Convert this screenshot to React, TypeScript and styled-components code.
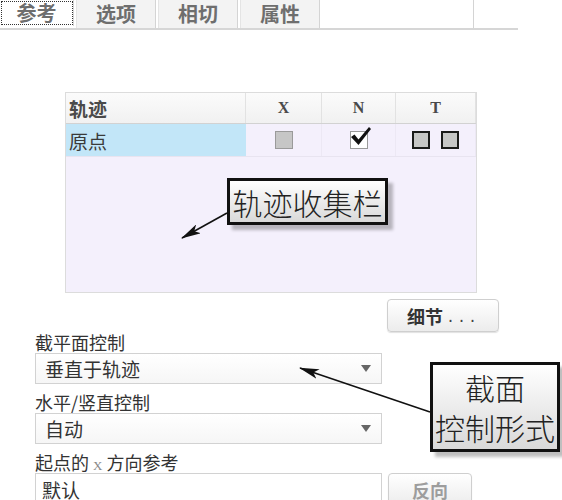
import React from 'react';
import styled, {createGlobalStyle} from "styled-components";

const GlobalStyle = createGlobalStyle`
  body {
    margin: 0;
    background: #ffffff;
    font-family: "Noto Sans CJK SC", "Noto Sans", sans-serif;
  }
`

const cjk = `"Noto Sans CJK SC", "Noto Sans", sans-serif`

export default function App() {
    return (
        <PageStyled>
            <GlobalStyle/>
            <TabBarStyled>
                <TabStyled $active>参考</TabStyled>
                <TabStyled>选项</TabStyled>
                <TabStyled>相切</TabStyled>
                <TabStyled>属性</TabStyled>
                <TabFillStyled/>
            </TabBarStyled>

            <TrajectoryPanelStyled>
                <TableRowStyled $header>
                    <HeadCellStyled $left>轨迹</HeadCellStyled>
                    <HeadCellStyled>X</HeadCellStyled>
                    <HeadCellStyled>N</HeadCellStyled>
                    <HeadCellStyled>T</HeadCellStyled>
                </TableRowStyled>
                <TableRowStyled>
                    <NameCellStyled>原点</NameCellStyled>
                    <BoxCellStyled><CheckStyled/></BoxCellStyled>
                    <BoxCellStyled>
                        <CheckStyled $white>
                            {/* heavy tick that rises past the top of the box */}
                            <svg width="24" height="24" viewBox="0 0 24 24">
                                <path d="M2 12 L5.5 9.5 L9.5 14.5 L20 2 L22 4 L9.5 20 Z" fill="#111"/>
                            </svg>
                        </CheckStyled>
                    </BoxCellStyled>
                    <BoxCellStyled>
                        <CheckStyled $dark/>
                        <CheckStyled $dark/>
                    </BoxCellStyled>
                </TableRowStyled>
                <CalloutStyled $x={161} $y={85} $w={161} $h={47}>轨迹收集栏</CalloutStyled>
            </TrajectoryPanelStyled>

            <FormStyled>
                <DetailRowStyled>
                    <ButtonStyled $bold>细节<DotsStyled>...</DotsStyled></ButtonStyled>
                </DetailRowStyled>

                <LabelStyled>截平面控制</LabelStyled>
                <SelectStyled>
                    <span>垂直于轨迹</span>
                    <CaretStyled/>
                </SelectStyled>

                <LabelStyled>水平/竖直控制</LabelStyled>
                <SelectStyled>
                    <span>自动</span>
                    <CaretStyled/>
                </SelectStyled>

                <LabelStyled>起点的 <SerifXStyled>X</SerifXStyled> 方向参考</LabelStyled>
                <InputRowStyled>
                    <InputBoxStyled>默认</InputBoxStyled>
                    <ButtonStyled $disabled>反向</ButtonStyled>
                </InputRowStyled>
            </FormStyled>

            <CalloutStyled $x={430} $y={362} $w={130} $h={90} $page>
                <CalloutLineStyled>截面</CalloutLineStyled>
                <CalloutLineStyled>控制形式</CalloutLineStyled>
            </CalloutStyled>

            <ArrowsStyled width="562" height="500" viewBox="0 0 562 500">
                <defs>
                    <marker id="head" viewBox="0 0 20 10" refX="19" refY="5" markerWidth="20" markerHeight="10"
                            markerUnits="userSpaceOnUse" orient="auto">
                        <path d="M0 0 L20 5 L0 10 L5 5 Z" fill="#111"/>
                    </marker>
                </defs>
                <line x1="227" y1="213" x2="182" y2="238" stroke="#111" strokeWidth="1.6" markerEnd="url(#head)"/>
                <line x1="430" y1="412" x2="300" y2="368" stroke="#111" strokeWidth="1.6" markerEnd="url(#head)"/>
            </ArrowsStyled>
        </PageStyled>
    );
}

const PageStyled = styled.div`
  position: relative;
  width: 562px;
  height: 500px;
  overflow: hidden;
  background: #fff;
`

const TabBarStyled = styled.div`
  display: flex;
  width: 518px;
  height: 28px;
  border-bottom: 2px solid #d6d6d6;
`

const TabStyled = styled.div<{ $active?: boolean }>`
  box-sizing: border-box;
  width: ${p => p.$active ? 74 : 80}px;
  margin-right: 2px;
  display: flex;
  align-items: center;
  justify-content: center;
  font-family: ${cjk};
  font-weight: 700;
  font-size: 20px;
  line-height: 22px;
  color: #6e6e6e;
  background: ${p => p.$active ? '#ffffff' : '#f3f3f3'};
  border-right: 1px solid #d4d4d4;
  border-left: ${p => p.$active ? 'none' : '1px solid #e4e4e4'};
  ${p => p.$active && `
    outline: 1px dotted #333;
    outline-offset: -2px;
    height: 26px;
  `}
`

const TabFillStyled = styled.div`
  flex: 1;
  border-right: 1px solid #d4d4d4;
  margin-right: 44px;
`

const TrajectoryPanelStyled = styled.div`
  position: relative;
  box-sizing: border-box;
  margin: 62px 0 0 65px;
  width: 412px;
  height: 201px;
  background: #f4f0fc;
  border: 1px solid #dcdcdc;
`

const TableRowStyled = styled.div<{ $header?: boolean }>`
  display: grid;
  grid-template-columns: 180px 76px 74px 1fr;
  height: ${p => p.$header ? 30 : 32}px;
  background: ${p => p.$header ? 'linear-gradient(#fbfbfb, #f1f1f1)' : 'transparent'};
  border-bottom: 1px solid ${p => p.$header ? '#d2d2d2' : '#e8e4f0'};
`

const HeadCellStyled = styled.div<{ $left?: boolean }>`
  display: flex;
  align-items: center;
  justify-content: ${p => p.$left ? 'flex-start' : 'center'};
  padding-left: ${p => p.$left ? 3 : 0}px;
  border-right: 1px solid #e2e2e2;
  font-family: ${p => p.$left ? cjk : '"Liberation Serif", serif'};
  font-weight: 700;
  font-size: ${p => p.$left ? 19 : 16}px;
  color: #4a4a4a;
`

const NameCellStyled = styled.div`
  display: flex;
  align-items: center;
  padding-left: 3px;
  background: #c2e6f8;
  font-family: ${cjk};
  font-size: 19px;
  color: #3a3a3a;
`

const BoxCellStyled = styled.div`
  display: flex;
  align-items: center;
  justify-content: center;
  gap: 11px;
  border-right: 1px solid #ece8f4;
`

const CheckStyled = styled.div<{ $white?: boolean, $dark?: boolean }>`
  position: relative;
  box-sizing: border-box;
  width: 18px;
  height: 18px;
  background: ${p => p.$white ? '#ffffff' : '#c6c6c6'};
  border: ${p => p.$dark ? '2px solid #1a1a1a' : '1px solid #9a9a9a'};

  svg {
    position: absolute;
    left: -2px;
    top: -7px;
  }
`

const CalloutStyled = styled.div<{ $x: number, $y: number, $w: number, $h: number, $page?: boolean }>`
  position: absolute;
  left: ${p => p.$x}px;
  top: ${p => p.$y}px;
  width: ${p => p.$w}px;
  height: ${p => p.$h}px;
  box-sizing: border-box;
  border: 3px solid #111;
  background: linear-gradient(#ffffff, #d9d9d9);
  box-shadow: 5px 5px 3px rgba(0, 0, 0, 0.25);
  display: flex;
  flex-direction: column;
  align-items: center;
  justify-content: center;
  font-family: ${cjk};
  font-weight: 300;
  font-size: 30px;
  line-height: 38px;
  color: #222;
  white-space: nowrap;
  z-index: 2;
`

const CalloutLineStyled = styled.div`
  height: 40px;
  line-height: 40px;
`

const FormStyled = styled.div`
  width: 464px;
  margin: 6px 0 0 35px;
  display: flex;
  flex-direction: column;
`

const DetailRowStyled = styled.div`
  display: flex;
  justify-content: flex-end;
`

const ButtonStyled = styled.div<{ $bold?: boolean, $disabled?: boolean }>`
  box-sizing: border-box;
  width: ${p => p.$disabled ? 84 : 112}px;
  height: 33px;
  display: flex;
  align-items: center;
  justify-content: center;
  border: 1px solid #cfcfcf;
  border-radius: 4px;
  background: linear-gradient(#ffffff, #ececec);
  box-shadow: 0 1px 1px rgba(0, 0, 0, 0.12);
  font-family: ${cjk};
  font-weight: 700;
  font-size: 18px;
  color: ${p => p.$disabled ? '#9d9d9d' : '#333'};
`

const DotsStyled = styled.span`
  font-family: "Liberation Mono", monospace;
  font-weight: 400;
  font-size: 15px;
  letter-spacing: 2px;
  margin-left: 3px;
  padding-top: 6px;
  color: #444;
`

const LabelStyled = styled.div`
  height: 21px;
  font-family: ${cjk};
  font-size: 18px;
  line-height: 21px;
  color: #333;
  white-space: nowrap;
`

const SerifXStyled = styled.span`
  font-family: "Liberation Serif", serif;
  font-size: 13px;
  line-height: 1;
  color: #888;
`

const SelectStyled = styled.div`
  box-sizing: border-box;
  width: 347px;
  height: 31px;
  margin-bottom: 8px;
  display: flex;
  align-items: center;
  justify-content: space-between;
  padding: 0 10px 0 9px;
  border: 1px solid #d2d2d2;
  background: linear-gradient(#ffffff, #f6f6f6);
  font-family: ${cjk};
  font-size: 19px;
  color: #333;
`

const CaretStyled = styled.span`
  width: 0;
  height: 0;
  border-left: 5px solid transparent;
  border-right: 5px solid transparent;
  border-top: 7px solid #666;
`

const InputRowStyled = styled.div`
  display: flex;
  align-items: flex-start;
  gap: 6px;
`

const InputBoxStyled = styled.div`
  box-sizing: border-box;
  width: 347px;
  height: 32px;
  padding-left: 6px;
  display: flex;
  align-items: center;
  border: 1px solid #d2d2d2;
  background: #fff;
  font-family: ${cjk};
  font-size: 19px;
  color: #333;
`

const ArrowsStyled = styled.svg`
  position: absolute;
  left: 0;
  top: 0;
  pointer-events: none;
  z-index: 3;
`
